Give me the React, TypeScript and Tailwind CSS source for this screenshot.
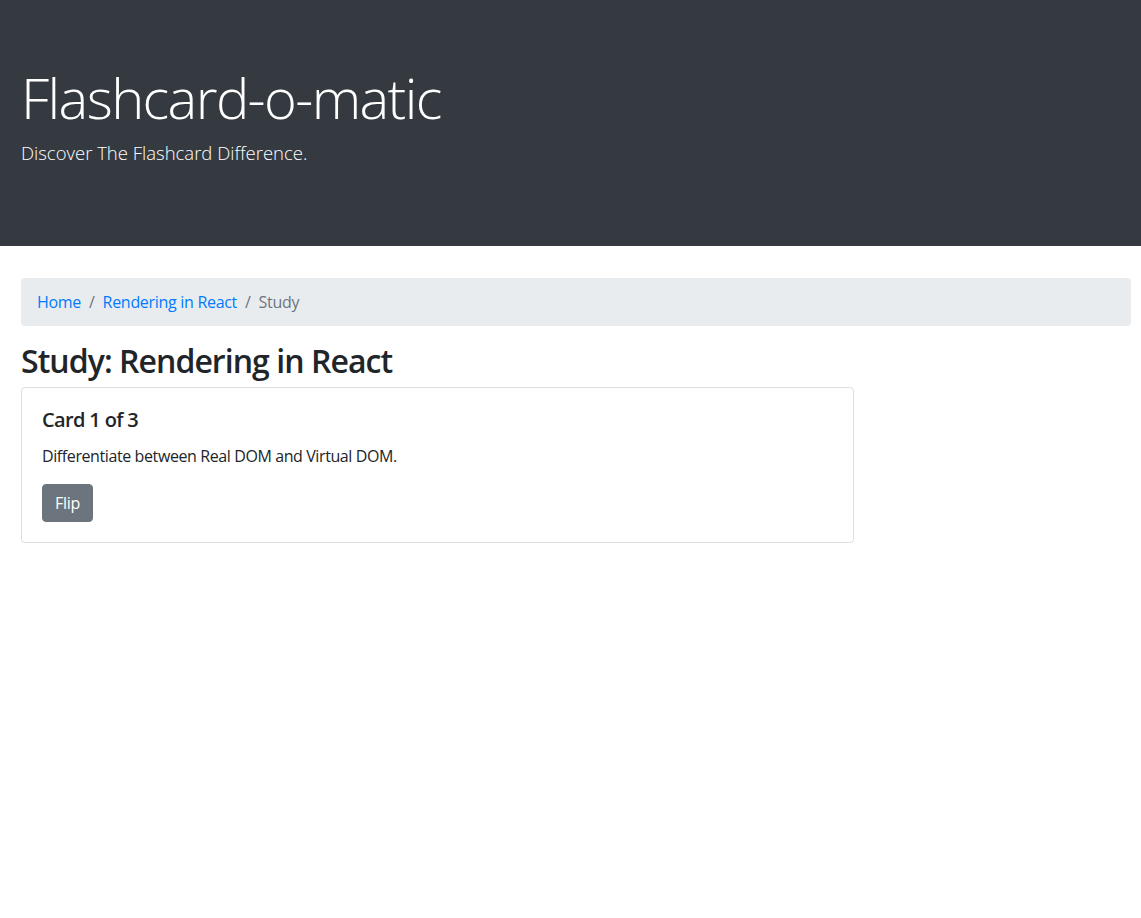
export default function App() {
  return (
    <div className="min-h-screen bg-white text-[#212529] font-['Open_Sans','Noto_Sans',sans-serif]">
      <header className="bg-[#343a40] text-white pt-16 pb-[63px] mb-8">
        <div className="pl-[21px] pr-[10px]">
          <h1 className="text-[56px] leading-[1.2] font-light tracking-[-1.6px] mb-2">Flashcard-o-matic</h1>
          <p className="text-[18.5px] leading-[1.5] font-light mb-4">Discover The Flashcard Difference.</p>
        </div>
      </header>

      <main className="pl-[21px] pr-[10px]">
        <nav className="bg-[#e9ecef] rounded px-4 py-3 mb-4">
          <ol className="flex items-center text-base leading-6 tracking-[-0.3px]">
            <li>
              <a href="#" className="text-[#007bff]">Home</a>
            </li>
            <li className="flex">
              <span className="px-2 text-[#6c757d]">/</span>
              <a href="#" className="text-[#007bff]">Rendering in React</a>
            </li>
            <li className="flex">
              <span className="px-2 text-[#6c757d]">/</span>
              <span className="text-[#6c757d]">Study</span>
            </li>
          </ol>
        </nav>

        <h2 className="text-[32px] leading-[1.2] font-semibold tracking-[-0.95px] mb-[7px]">Study: Rendering in React</h2>

        <div className="w-[833px] border border-black/[0.125] rounded">
          <div className="p-5">
            <h5 className="text-[20px] leading-[1.2] font-semibold tracking-[-0.65px] mb-3">Card 1 of 3</h5>
            <p className="text-base leading-6 tracking-[-0.4px] mb-4">Differentiate between Real DOM and Virtual DOM.</p>
            <button className="bg-[#6c757d] text-white text-base leading-6 tracking-[-0.3px] px-3 py-1.5 rounded border border-[#6c757d]">
              Flip
            </button>
          </div>
        </div>
      </main>
    </div>
  );
}
